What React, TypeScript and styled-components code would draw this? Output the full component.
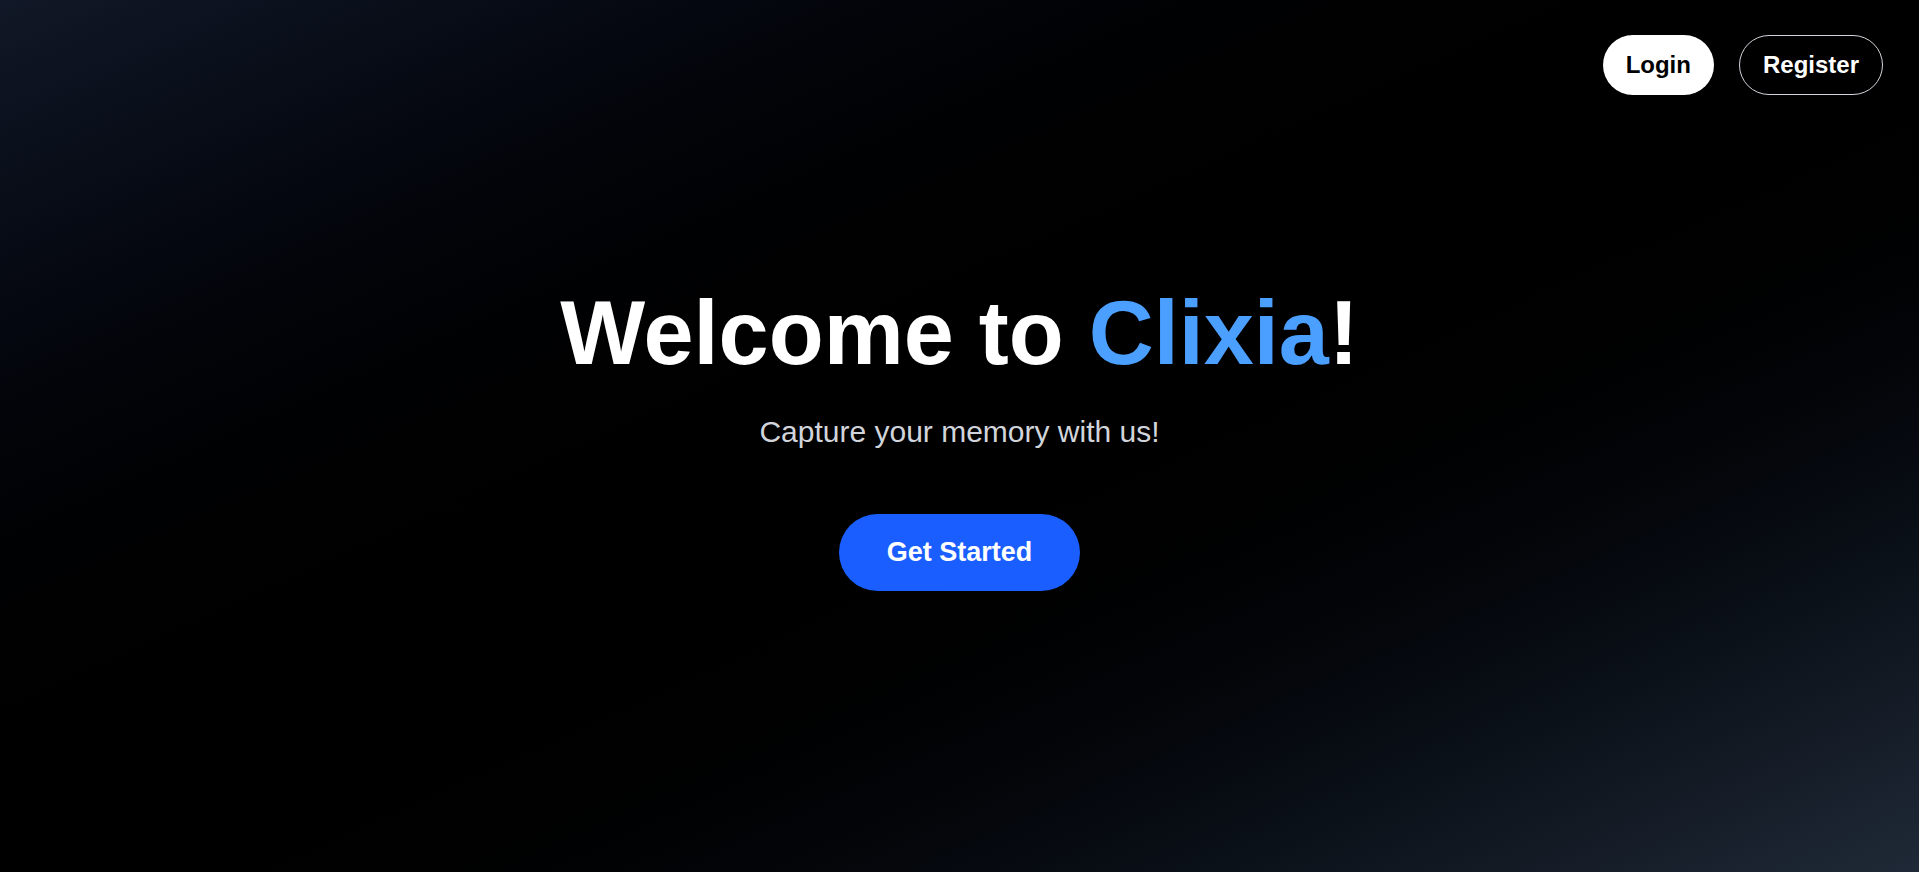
import React from 'react';
import styled, { createGlobalStyle } from 'styled-components';

const GlobalStyle = createGlobalStyle`
  * {
    box-sizing: border-box;
  }

  html, body {
    margin: 0;
    padding: 0;
    font-family: "Liberation Sans", Arial, sans-serif;
    background: #000;
  }
`;

const Page = styled.div`
  min-height: 100vh;
  display: flex;
  flex-direction: column;
  background: linear-gradient(to bottom right, #111827, #000000, #1f2937);
  background: linear-gradient(to bottom right in oklab, #111827, #000000, #1f2937);
  color: #fff;
`;

const Header = styled.header`
  display: flex;
  justify-content: flex-end;
  align-items: center;
  gap: 25px;
  padding: 35px 36px 0;
`;

const NavButton = styled.button<{ variant: 'solid' | 'outline' }>`
  height: 60px;
  padding: 0 23px;
  border-radius: 9999px;
  font-family: inherit;
  font-size: 24px;
  font-weight: 700;
  cursor: pointer;
  background: ${props => props.variant === 'solid' ? '#ffffff' : 'transparent'};
  color: ${props => props.variant === 'solid' ? '#000000' : '#ffffff'};
  border: ${props => props.variant === 'solid' ? 'none' : '1px solid #d1d5db'};
`;

const Hero = styled.main`
  flex: 1;
  display: flex;
  flex-direction: column;
  align-items: center;
  justify-content: center;
  padding-bottom: 89px;
  text-align: center;
`;

const Title = styled.h1`
  margin: 0;
  font-size: 90px;
  line-height: 1;
  font-weight: 700;
  color: #ffffff;
`;

const Brand = styled.span`
  color: #4b9fff;
`;

const Subtitle = styled.p`
  margin: 36px 0 0;
  font-size: 30px;
  line-height: 36px;
  color: #d1d5db;
`;

const StartButton = styled.button`
  margin-top: 64px;
  padding: 23px 48px;
  border: none;
  border-radius: 9999px;
  background: #1a5eff;
  color: #ffffff;
  font-family: inherit;
  font-size: 27px;
  line-height: 31px;
  font-weight: 700;
  cursor: pointer;
`;

const App: React.FC = () => {
  return (
    <>
      <GlobalStyle />
      <Page>
        <Header>
          <NavButton variant="solid">Login</NavButton>
          <NavButton variant="outline">Register</NavButton>
        </Header>
        <Hero>
          <Title>
            Welcome to <Brand>Clixia</Brand>!
          </Title>
          <Subtitle>Capture your memory with us!</Subtitle>
          <StartButton>Get Started</StartButton>
        </Hero>
      </Page>
    </>
  );
};

export default App;
